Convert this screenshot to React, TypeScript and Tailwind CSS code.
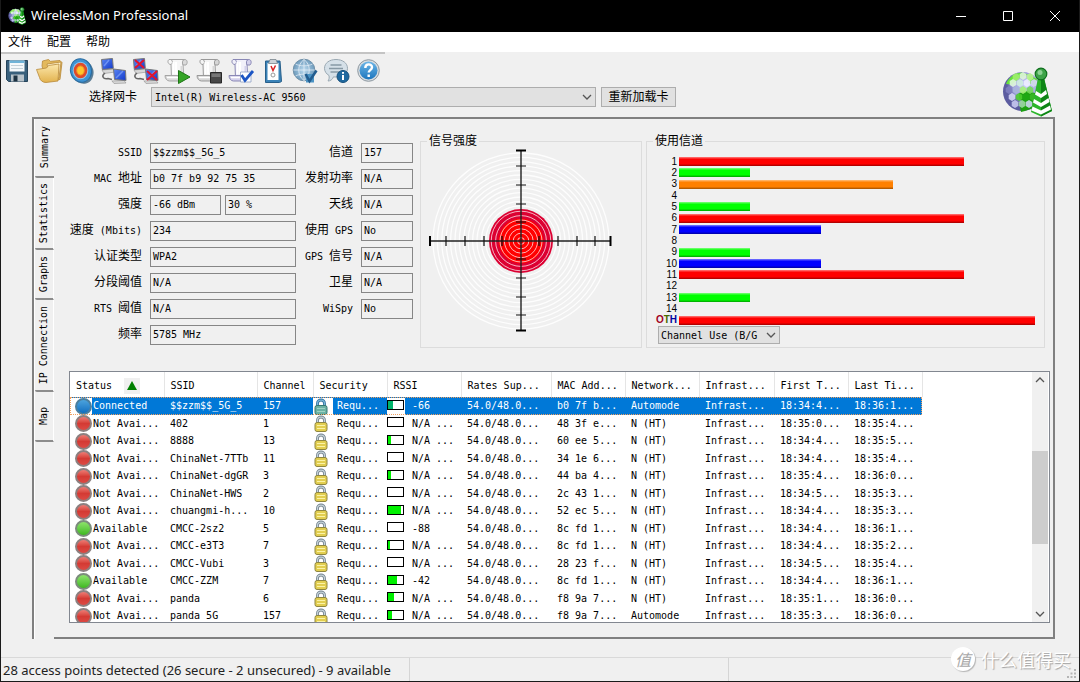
import { useState } from "react";
import type { ReactNode } from "react";

interface AccessPoint {
  status: string;
  ssid: string;
  channel: string;
  level: number;
  rssi: string;
  mac: string;
  network: string;
  first: string;
  last: string;
}

const accessPoints: AccessPoint[] = [
  { status: "Connected", ssid: "$$zzm$$_5G_5", channel: "157", level: 30, rssi: "-66", mac: "b0 7f b...", network: "Automode", first: "18:34:4...", last: "18:36:1..." },
  { status: "Not Avai...", ssid: "402", channel: "1", level: 0, rssi: "N/A ...", mac: "48 3f e...", network: "N (HT)", first: "18:35:0...", last: "18:35:4..." },
  { status: "Not Avai...", ssid: "8888", channel: "13", level: 22, rssi: "N/A ...", mac: "60 ee 5...", network: "N (HT)", first: "18:34:4...", last: "18:35:5..." },
  { status: "Not Avai...", ssid: "ChinaNet-7TTb", channel: "11", level: 0, rssi: "N/A ...", mac: "34 1e 6...", network: "N (HT)", first: "18:34:4...", last: "18:35:4..." },
  { status: "Not Avai...", ssid: "ChinaNet-dgGR", channel: "3", level: 22, rssi: "N/A ...", mac: "44 ba 4...", network: "N (HT)", first: "18:35:4...", last: "18:36:0..." },
  { status: "Not Avai...", ssid: "ChinaNet-HWS", channel: "2", level: 0, rssi: "N/A ...", mac: "2c 43 1...", network: "N (HT)", first: "18:34:5...", last: "18:35:3..." },
  { status: "Not Avai...", ssid: "chuangmi-h...", channel: "10", level: 88, rssi: "N/A ...", mac: "52 ec 5...", network: "N (HT)", first: "18:34:4...", last: "18:35:3..." },
  { status: "Available", ssid: "CMCC-2sz2", channel: "5", level: 0, rssi: "-88", mac: "8c fd 1...", network: "N (HT)", first: "18:34:4...", last: "18:36:1..." },
  { status: "Not Avai...", ssid: "CMCC-e3T3", channel: "7", level: 10, rssi: "N/A ...", mac: "8c fd 1...", network: "N (HT)", first: "18:34:4...", last: "18:35:2..." },
  { status: "Not Avai...", ssid: "CMCC-Vubi", channel: "3", level: 0, rssi: "N/A ...", mac: "28 23 f...", network: "N (HT)", first: "18:34:5...", last: "18:35:4..." },
  { status: "Available", ssid: "CMCC-ZZM", channel: "7", level: 62, rssi: "-42", mac: "8c fd 1...", network: "N (HT)", first: "18:34:4...", last: "18:36:1..." },
  { status: "Not Avai...", ssid: "panda", channel: "6", level: 38, rssi: "N/A ...", mac: "f8 9a 7...", network: "N (HT)", first: "18:35:1...", last: "18:36:0..." },
  { status: "Not Avai...", ssid: "panda 5G", channel: "157", level: 24, rssi: "N/A ...", mac: "f8 9a 7...", network: "Automode", first: "18:35:3...", last: "18:36:0..." },
];

const columns = [
  { title: "Status", width: "w-[94px]" },
  { title: "SSID", width: "w-[93px]" },
  { title: "Channel", width: "w-[56px]" },
  { title: "Security", width: "w-[74px]" },
  { title: "RSSI", width: "w-[74px]" },
  { title: "Rates Sup...", width: "w-[90px]" },
  { title: "MAC Add...", width: "w-[74px]" },
  { title: "Network...", width: "w-[74px]" },
  { title: "Infrast...", width: "w-[75px]" },
  { title: "First T...", width: "w-[74px]" },
  { title: "Last Ti...", width: "w-[74px]" },
];

const tabs = [
  { name: "Summary", height: "h-[59px]" },
  { name: "Statistics", height: "h-[72px]" },
  { name: "Graphs", height: "h-[50px]" },
  { name: "IP Connection", height: "h-[92px]" },
  { name: "Map", height: "h-[50px]" },
];

const leftFields = [
  { label: "SSID", values: ["$$zzm$$_5G_5"] },
  { label: "MAC 地址", values: ["b0 7f b9 92 75 35"] },
  { label: "强度", values: ["-66 dBm", "30 %"] },
  { label: "速度 (Mbits)", values: ["234"] },
  { label: "认证类型", values: ["WPA2"] },
  { label: "分段阈值", values: ["N/A"] },
  { label: "RTS 阈值", values: ["N/A"] },
  { label: "频率", values: ["5785 MHz"] },
];

const rightFields = [
  { label: "信道", values: ["157"] },
  { label: "发射功率", values: ["N/A"] },
  { label: "天线", values: ["N/A"] },
  { label: "使用 GPS", values: ["No"] },
  { label: "GPS 信号", values: ["N/A"] },
  { label: "卫星", values: ["N/A"] },
  { label: "WiSpy", values: ["No"] },
];

const red = "bg-[linear-gradient(#ff8080,#ff0000_25%,#ff0000_75%,#a00000)]";
const green = "bg-[linear-gradient(#80ff80,#00ff00_25%,#00ff00_75%,#00a000)]";
const blue = "bg-[linear-gradient(#8080ff,#0000ff_25%,#0000ff_75%,#0000a0)]";
const orange = "bg-[linear-gradient(#ffc080,#ff8000_25%,#ff8000_75%,#a05000)]";

const channelUse = [
  { name: "1", value: 80, color: red },
  { name: "2", value: 20, color: green },
  { name: "3", value: 60, color: orange },
  { name: "4", value: 0, color: red },
  { name: "5", value: 20, color: green },
  { name: "6", value: 80, color: red },
  { name: "7", value: 40, color: blue },
  { name: "8", value: 0, color: red },
  { name: "9", value: 20, color: green },
  { name: "10", value: 40, color: blue },
  { name: "11", value: 80, color: red },
  { name: "12", value: 0, color: red },
  { name: "13", value: 20, color: green },
  { name: "14", value: 0, color: red },
  { name: "OTH", value: 100, color: red },
];

// Chinese runs are set larger than the Latin ones
function Mixed({ text }: { text: string }) {
  return (
    <>
      {text.split(/([\u4e00-\u9fff]+)/).filter(Boolean).map((part, i) => (
        <span key={i} className={/[\u4e00-\u9fff]/.test(part) ? "text-xs" : "text-[10px]"}>{part}</span>
      ))}
    </>
  );
}

function FieldColumn({ fields, labelWidth, fieldWidth }: { fields: { label: string; values: string[] }[]; labelWidth: string; fieldWidth: string }) {
  return (
    <div className="flex flex-col gap-1.5 pt-2.5 shrink-0">
      {fields.map((field) => (
        <div key={field.label} className="flex items-center gap-2 h-5">
          <label htmlFor={field.label} className={`${labelWidth} text-right whitespace-pre leading-5`}><Mixed text={field.label} /></label>
          <div className={`${fieldWidth} flex gap-1`}>
            {field.values.map((value, i) => (
              <textarea key={i} rows={1} id={i === 0 ? field.label : undefined} aria-label={i > 0 ? "信号百分比" : undefined} readOnly defaultValue={value} className="block min-w-0 flex-1 h-5 px-0.5 border border-[#868686] bg-[#f0f0f0] text-[10px] leading-[18px] resize-none overflow-hidden whitespace-pre outline-none" />
            ))}
          </div>
        </div>
      ))}
    </div>
  );
}

function Chevron({ up = false }: { up?: boolean }) {
  return (
    <svg viewBox="0 0 10 6" className="w-2.5 h-1.5" fill="none" stroke="#555" strokeWidth="1.3">
      <path d={up ? "M1 5l4-4 4 4" : "M1 1l4 4 4-4"} />
    </svg>
  );
}

function Scroll({ fill, line, shade }: { fill: string; line: string; shade: string }) {
  return (
    <g strokeWidth="1" strokeLinejoin="round">
      <path d="M6 2.500h15.500c-1.500 1.500-2 3-1.500 5l.8 14H8.500L8 7.500C5 7.500 4 4 6 2.500z" fill={fill} stroke={line} />
      <path d="M8 7.500c2-1 2-4-.5-5" fill="none" stroke={line} />
      <path d="M20 8c-1.200-2.500-.5-5.500 1.800-5.500 2.500 0 3.200 3.500 1.200 5.500z" fill={shade} stroke={line} />
      <path d="M2 18.500h13c.2 3 2 5 4.500 5.500L6.500 24c-2.500 0-4.500-2.500-4.500-5.500z" fill={shade} stroke={line} />
      <path d="M4 20.500h11" stroke="#fff" strokeWidth="1.500" />
      <path d="M10.500 5v12M13 5v12" stroke="#fff" strokeWidth="2" />
      <path d="M18.500 9v12" stroke={shade} strokeWidth="2" />
    </g>
  );
}

function Computers() {
  return (
    <g>
      <path d="M3 13l11-1 2 3-11 1.500z" fill="#d8d8d8" stroke="#999" strokeWidth=".7" />
      <path d="M2.500 2.500l11-1 .8 10-11 1z" fill="url(#screen)" stroke="#777" />
      <path d="M6 16c-4 3-2 6.500 3 5.500l4 1" fill="none" stroke="#666" strokeWidth="1.500" />
      <path d="M13 24l12-.5 2 2.500-12 .5z" fill="#d8d8d8" stroke="#999" strokeWidth=".7" />
      <path d="M14.500 12l12 1.500.5 10-11.500-1z" fill="url(#screen)" stroke="#777" />
      <path d="M5 9l5-6M17 21l7-7" stroke="#8fb0ff" strokeWidth="1.500" opacity=".6" />
    </g>
  );
}

const toolbar: { name: string; icon: ReactNode }[] = [
  {
    name: "Save",
    icon: (
      <g>
        <path d="M3.500 3.500h21v21H5.500l-2-2z" fill="#39607c" stroke="#27445a" />
        <path d="M6.500 3.500h15v11h-15z" fill="#f4f8fb" />
        <path d="M6.500 3.500h15v2.500h-15z" fill="#6fb3d8" />
        <path d="M8 8.500h12M8 11.500h12" stroke="#c3d0d8" />
        <path d="M8 17.500h13v7H8z" fill="#b9c3ca" />
        <path d="M10.500 18.500h4v6h-4z" fill="#1d3242" />
      </g>
    ),
  },
  {
    name: "Open",
    icon: (
      <g stroke="#b8893a" strokeWidth=".8" strokeLinejoin="round">
        <path d="M7 9l.5-5 6-1.500 2 1.800L25 3.500l2 2-2 17-14 1z" fill="#e3b95c" />
        <path d="M12 7l14-2-2 16-9 1z" fill="#fff3cc" />
        <path d="M1.500 12.500l10-1.500 2-2.500 10.500-1.500-1 17-12 1.500c-3 0-6-2-6.500-5z" fill="url(#folder)" />
      </g>
    ),
  },
  {
    name: "Target",
    icon: (
      <g>
        <ellipse cx="16" cy="15" rx="10.500" ry="11.800" fill="#5b7d96" transform="rotate(-15 16 15)" />
        <ellipse cx="14" cy="13.500" rx="10.500" ry="11.800" fill="#3d93d4" stroke="#2b6c9f" transform="rotate(-15 14 13.500)" />
        <ellipse cx="13.500" cy="13.500" rx="7.800" ry="8.800" fill="#8fc6ee" />
        <ellipse cx="13.500" cy="13.500" rx="6.800" ry="7.800" fill="#de4a2b" />
        <ellipse cx="13.500" cy="13.500" rx="3.800" ry="4.600" fill="#ffc62e" stroke="#f38d20" />
      </g>
    ),
  },
  { name: "Connect", icon: <Computers /> },
  {
    name: "Disconnect",
    icon: (
      <g>
        <Computers />
        <path d="M4 3l9 8M13 3l-9 8M16 14l10 9M26 14l-10 9" stroke="#e3142c" strokeWidth="2" />
      </g>
    ),
  },
  {
    name: "Start logging",
    icon: (
      <g>
        <Scroll fill="#f6f6f6" line="#a5a5a5" shade="#dadada" />
        <path d="M15.500 13.500l11.500 6.500-11.500 6.500z" fill="#35a526" stroke="#1e7616" strokeLinejoin="round" />
      </g>
    ),
  },
  {
    name: "Stop logging",
    icon: (
      <g>
        <Scroll fill="#f4f4f4" line="#999" shade="#d6d6d6" />
        <path d="M15.500 15.500h11v10.500h-11z" fill="#484848" stroke="#282828" />
        <path d="M16.500 16.500h9v3.500h-9z" fill="#777" />
      </g>
    ),
  },
  {
    name: "Log options",
    icon: (
      <g>
        <Scroll fill="#f1f0fa" line="#8a88b5" shade="#d3d0ec" />
        <path d="M13.500 15h10.500v10H13.500z" fill="#fff" stroke="#8da0c4" strokeWidth=".8" />
        <path d="M14.500 18l3.500 5.500L26 14" fill="none" stroke="#1b55c4" strokeWidth="2.800" />
      </g>
    ),
  },
  {
    name: "Check list",
    icon: (
      <g>
        <path d="M6.500 4h14.500l1.500 20.500-2 1h-14z" fill="#3b83b8" stroke="#275f8a" />
        <path d="M8.500 6h11v17H8.500z" fill="#fff" />
        <path d="M11 2.500h6l1.500 4H9.500z" fill="#ccd3d8" stroke="#7a858d" strokeWidth=".8" />
        <path d="M12 9l2 4.500 2.500-5" fill="none" stroke="#d62020" strokeWidth="1.500" />
        <circle cx="14" cy="18" r="2" fill="none" stroke="#999" />
      </g>
    ),
  },
  {
    name: "Web update",
    icon: (
      <g>
        <circle cx="13" cy="13" r="10.800" fill="url(#globe)" stroke="#7291a8" />
        <path d="M2.500 13h21M13 2.500v21M4.500 7c5 2.500 12 2.500 17 0M4.500 19c5-2.500 12-2.500 17 0M13 2.500c-7 5-7 16 0 21M13 2.500c7 5 7 16 0 21" fill="none" stroke="#e3eef6" strokeWidth=".8" />
        <path d="M15 17h8v8.500h-8z" fill="#4b93c4" />
        <path d="M14.500 17l4 7L25.500 13.500" fill="none" stroke="#225d8f" strokeWidth="2.500" />
      </g>
    ),
  },
  {
    name: "Information",
    icon: (
      <g>
        <path d="M13 2.500c6.500 0 11.500 3.500 11.500 8.800S19.500 20 13 20c-1 0-1.500 0-2.500-.2-1 3-3.500 4.200-5.500 4.200 1-1.300 1.500-3.500 1-5.500C3.500 17 1.500 14.500 1.500 11.300 1.500 6 6.500 2.500 13 2.500z" fill="#d5e0e8" stroke="#9aa8b2" />
        <path d="M7.500 8h11M6 11.500h14M7.500 15h9" stroke="#8799a5" strokeWidth="1.400" />
        <circle cx="20" cy="19.500" r="6" fill="#20699f" stroke="#164f7b" />
        <path d="M20 18v5M20 15v1.800" stroke="#fff" strokeWidth="2" />
      </g>
    ),
  },
  {
    name: "Help",
    icon: (
      <g>
        <circle cx="13.500" cy="13.500" r="10.800" fill="#d7dce0" stroke="#8e99a1" />
        <circle cx="13.500" cy="13.500" r="9" fill="url(#help)" />
        <path d="M10.300 11c0-4.800 6.700-4.500 6.700-.7 0 2.700-3.300 2.900-3.300 5.200M13.700 17.500v2.500" fill="none" stroke="#fff" strokeWidth="2.400" />
      </g>
    ),
  },
];

const hexCells: [number, number, string][] = [
  [14, 10, "#9ff06c"], [21, 9, "#dff5da"], [28, 10, "#b9f58e"],
  [11, 16, "#e0f7dd"], [18, 16, "#cfeee0"], [25, 16, "#eeedff"], [32, 16, "#d8d7fb"],
  [7, 23, "#8080c0"], [14, 23, "#a8b4dc"], [21, 23, "#a4f278"], [28, 23, "#74d85a"],
  [10, 30, "#d4d5f6"], [17, 30, "#4ccc2e"], [24, 30, "#1fa814"], [31, 30, "#38b828"],
  [13, 37, "#c6c8f0"], [20, 37, "#9cd8a4"], [27, 37, "#cbd6ee"],
];

function Logo({ className }: { className: string }) {
  return (
    <svg viewBox="0 0 50 50" className={className}>
      <defs>
        <radialGradient id="ball" cx="60%" cy="35%"><stop offset="0" stopColor="#cfd0ff" /><stop offset=".7" stopColor="#9a9adb" /><stop offset="1" stopColor="#5c5ca0" /></radialGradient>
      </defs>
      <circle cx="20.500" cy="24.500" r="19.500" fill="url(#ball)" />
      <path d="M4 17c2-6 8-11 16-11.500l6 2-10 4-6 6zM27 8l8 4-2 8-7-5z" fill="#66e03c" />
      <path d="M17 26l8-2 8 2 4 6-6 9-8 3-4 1-1-5 3-4-4-5z" fill="#1da012" />
      {hexCells.map(([x, y, fill], i) => (
        <path key={i} d="M0-3.900L3.300-2V2L0 3.900-3.300 2v-4z" transform={`translate(${x} ${y})`} fill={fill} opacity=".9" />
      ))}
      <path d="M36 11l-7 34 10 4.500L50 44l-8-33z" fill="#2bb52a" />
      <path d="M39 11v38.500L50 44l-8-33z" fill="#0e8516" />
      <path d="M34 24l5 3 5-4 1 4-6 4-6-3.500zM32 32l7 4 7.500-5 1 4-8.500 5-8-4.500zM30.500 39.500l8.500 4 9-5 1 4-10 5-9.500-4z" fill="#fff" />
      <circle cx="39" cy="7" r="5.800" fill="#3da348" stroke="#0d6f1b" strokeWidth="1.200" />
      <circle cx="38" cy="5.500" r="2.500" fill="#a0dca6" opacity=".8" />
    </svg>
  );
}

function Radar() {
  const rings = Array.from({ length: 20 }, (_, i) => (i + 1) * 4.4);
  const ticks = [-75, -56, -37, -19, 18, 37, 56, 74];
  return (
    <svg viewBox="-92 -92 184 184" className="w-[184px] h-[184px] ml-2">
      <circle r="32" fill="#dc0032" />
      <circle r="22.500" fill="#ff0000" />
      {rings.map((r) => (
        <circle key={r} r={r < 33 ? r - 1 : r} fill="none" stroke="#fff" strokeWidth={r < 33 ? 1 : 1.3} opacity={r < 33 ? 0.7 : 0.85} />
      ))}
      <path d="M0-90V90M-90 0H90" stroke="#222" strokeWidth="1.400" />
      <path d="M-5-90.500H5M-5 89.500H5M-91-5V5M89.500-5V5" stroke="#000" strokeWidth="2" />
      {ticks.map((t) => (
        <path key={t} d={`M${t}-5V5M-5 ${t}H5`} stroke="#111" strokeWidth="1.200" />
      ))}
    </svg>
  );
}

function Padlock({ selected }: { selected: boolean }) {
  return (
    <svg viewBox="0 0 14 17" className="w-3.5 h-[17px] shrink-0">
      <path d="M3.500 9V5.500C3.500.8 10.500.8 10.500 5.500V9" fill="none" stroke={selected ? "#2d6f9e" : "#71808b"} strokeWidth="2.800" />
      <path d="M3.500 8V5.500C3.500 1 10.500 1 10.500 5.500V8" fill="none" stroke={selected ? "#7ab6d8" : "#c5d2da"} strokeWidth="1.200" />
      <rect x="1" y="7.500" width="12" height="9" rx="2" fill={selected ? "#6cb2a4" : "#e2ce50"} stroke={selected ? "#35776f" : "#8f8640"} />
      <path d="M3 10.500h8M3 13.500h8" stroke={selected ? "#9ed3c4" : "#fbf3a5"} />
    </svg>
  );
}

function StatusLight({ status }: { status: string }) {
  const tone =
    status === "Connected"
      ? "bg-linear-to-b from-[#4ba3dd] to-[#0d6fc0] border-[#4b7f9f]"
      : status === "Available"
        ? "bg-linear-to-b from-[#8ce46a] to-[#3cb81c] border-[#7c8c7c]"
        : "bg-linear-to-b from-[#ee7b75] via-[#d43a34] to-[#dc4a44] border-[#8c8080]";
  return <span className={`block size-[17px] rounded-full border-2 ${tone}`} />;
}

export default function App() {
  const [tab, setTab] = useState("Summary");
  const [selected, setSelected] = useState(0);

  return (
    <div className="relative h-screen min-h-[600px] flex flex-col overflow-hidden border border-t-0 border-[#1a1a1a] bg-[#f0f0f0] text-black text-[10px] font-['DejaVu_Sans_Mono','Noto_Sans_CJK_SC',monospace]">
      <svg className="absolute size-0" aria-hidden="true">
        <defs>
          <linearGradient id="screen" x2="1" y2="1"><stop offset="0" stopColor="#5a86f5" /><stop offset="1" stopColor="#1238c8" /></linearGradient>
          <linearGradient id="folder" x2="0" y2="1"><stop offset="0" stopColor="#fce8ac" /><stop offset="1" stopColor="#e2b24e" /></linearGradient>
          <radialGradient id="globe"><stop offset="0" stopColor="#b8d8ee" /><stop offset="1" stopColor="#6f9cbd" /></radialGradient>
          <linearGradient id="help" x2="0" y2="1"><stop offset="0" stopColor="#6db6e8" /><stop offset="1" stopColor="#1d76bd" /></linearGradient>
        </defs>
      </svg>

      <header className="h-8 shrink-0 flex items-center bg-black text-white pl-[7px]">
        <Logo className="size-[18px] mr-[5px]" />
        <h1 className="flex-1 text-[13px] font-['Noto_Sans',sans-serif]">WirelessMon Professional</h1>
        <button aria-label="Minimize" className="w-[47px] h-8 flex items-center justify-center">
          <svg viewBox="0 0 12 12" className="size-3" stroke="#fff"><path d="M1 6.500h10" /></svg>
        </button>
        <button aria-label="Maximize" className="w-[47px] h-8 flex items-center justify-center">
          <svg viewBox="0 0 12 12" className="size-3" stroke="#fff" fill="none"><path d="M1.500 1.500h9v9h-9z" /></svg>
        </button>
        <button aria-label="Close" className="w-12 h-8 flex items-center justify-center">
          <svg viewBox="0 0 12 12" className="size-3" stroke="#fff"><path d="M1 1l10 10M11 1L1 11" /></svg>
        </button>
      </header>

      <nav className="h-5 shrink-0 flex items-center gap-[15px] pl-[7px] bg-white text-xs leading-5">
        <button>文件</button>
        <button>配置</button>
        <button>帮助</button>
      </nav>

      <div className="h-[65px] shrink-0 flex justify-between">
        <div className="flex flex-col">
          <div className="w-96 h-0.5 bg-[#c4c4c4]" />
          <div className="flex h-[33px] items-center">
            {toolbar.map((tool) => (
              <button key={tool.name} title={tool.name} aria-label={tool.name} className="w-8 h-8 flex items-center justify-center">
                <svg viewBox="0 0 28 28" className="size-7">{tool.icon}</svg>
              </button>
            ))}
          </div>
          <div className="flex items-center h-5 pl-[88px]">
            <label htmlFor="adapter" className="text-xs w-[62px] leading-5">选择网卡</label>
            <div className="relative">
              <select id="adapter" className="appearance-none w-[445px] h-5 pl-[3px] border border-[#adadad] bg-[#e1e1e1] outline-none">
                <option>Intel(R) Wireless-AC 9560</option>
              </select>
              <span className="absolute right-1 top-[7px] pointer-events-none"><Chevron /></span>
            </div>
            <button className="ml-[5px] w-[75px] h-5 border border-[#adadad] bg-[#e1e1e1] text-xs leading-4">重新加载卡</button>
          </div>
        </div>
        <Logo className="size-[50px] mr-[27px] self-end" />
      </div>

      <main className="flex-1 min-h-0 flex ml-[31px] mr-6 border-l-2 border-t-2 border-[#808080]">
        <div role="tablist" aria-orientation="vertical" className="w-5 shrink-0 border-l border-white">
          {tabs.map((t) => (
            <button
              key={t.name}
              role="tab"
              aria-selected={tab === t.name}
              onClick={() => setTab(t.name)}
              className={`${t.height} w-full flex items-center justify-center border-b-2 border-b-[#8c8c8c] rounded-bl-xs ${tab === t.name ? "" : "border-r border-r-white"}`}
            >
              <span className="[writing-mode:vertical-rl] rotate-180 whitespace-pre leading-4">{t.name}</span>
            </button>
          ))}
        </div>

        <div className="flex-1 min-w-0 flex flex-col border-r-2 border-b-2 border-[#808080] pt-3.5">
          <div className="flex h-[215px] shrink-0">
            <FieldColumn fields={leftFields} labelWidth="w-[88px]" fieldWidth="w-[146px]" />
            <FieldColumn fields={rightFields} labelWidth="w-[57px]" fieldWidth="w-[52px]" />
            <fieldset className="ml-[7px] w-[222px] shrink-0 border border-[#dcdcdc]">
              <legend className="ml-1.5 px-0.5 text-xs leading-4">信号强度</legend>
              <Radar />
            </fieldset>
            <fieldset className="ml-1 mr-2 flex-1 min-w-0 border border-[#dcdcdc]">
              <legend className="ml-1.5 px-0.5 text-xs leading-4">使用信道</legend>
              <div className="h-[170px] mt-[7px] mr-[9px] flex flex-col font-['Liberation_Sans',sans-serif]">
                {channelUse.map((ch) => (
                  <div key={ch.name} className="flex-1 min-h-0 flex items-center">
                    {ch.name === "OTH" ? (
                      <span className="w-8 pr-0.5 text-right leading-3 font-bold"><span className="text-[#a00020]">O</span><span className="text-[#4a6a00]">T</span><span className="text-[#0000a0]">H</span></span>
                    ) : (
                      <span className="w-8 pr-0.5 text-right leading-3">{ch.name}</span>
                    )}
                    <div className="flex-1">
                      <div className={`h-[9px] ${ch.color}`} style={{ width: `${ch.value}%` }} />
                    </div>
                  </div>
                ))}
              </div>
              <div className="relative w-[122px] ml-[11px]">
                <select aria-label="使用信道" className="appearance-none w-full h-[18px] pl-0.5 border border-[#adadad] bg-[#e1e1e1] outline-none">
                  <option>Channel Use (B/G</option>
                </select>
                <span className="absolute right-1 top-1.5 pointer-events-none"><Chevron /></span>
              </div>
            </fieldset>
          </div>

          <div className="flex-1 min-h-0 mt-[23px] ml-[15px] mr-[3px] mb-3.5 flex border border-[#828790] bg-white">
            <div className="flex-1 min-w-0 overflow-hidden">
              <table className="w-[852px] table-fixed border-collapse text-left">
                <thead>
                  <tr className="h-[25px]">
                    {columns.map((col, i) => (
                      <th key={col.title} className={`${col.width} p-0 pl-1.5 pt-0.5 font-normal whitespace-pre border-r border-[#e5e5e5]`}>
                        {col.title}
                        {i === 0 && (
                          <span className="inline-flex align-middle ml-3 size-4 items-center justify-center bg-[#f0f0f0]">
                            <svg viewBox="0 0 10 9" className="w-2.5 h-[9px]"><path d="M5 0l5 9H0z" fill="#008000" /></svg>
                          </span>
                        )}
                      </th>
                    ))}
                  </tr>
                </thead>
                <tbody>
                  {accessPoints.map((ap, i) => {
                    const active = i === selected;
                    return (
                      <tr
                        key={ap.ssid}
                        onClick={() => setSelected(i)}
                        className={`odd:h-[18px] even:h-[17px] whitespace-pre leading-4 ${active ? "bg-[#0078d7] text-white outline outline-dotted -outline-offset-1 outline-[#f0a060]" : ""}`}
                      >
                        <td className="p-0">
                          <div className="flex items-center h-[17px]">
                            <span className="w-[22px] pl-[5px] bg-white"><StatusLight status={ap.status} /></span>
                            <span className="pl-px">{ap.status}</span>
                          </div>
                        </td>
                        <td className="p-0 pl-1.5">{ap.ssid}</td>
                        <td className="p-0 pl-1.5">{ap.channel}</td>
                        <td className="p-0">
                          <div className="flex items-center h-[17px]">
                            <span className="w-5 pl-px mr-1 bg-white"><Padlock selected={active} /></span>
                            Requ...
                          </div>
                        </td>
                        <td className="p-0">
                          <div className="flex items-center h-[17px]">
                            <span className="w-[18px] h-[17px] pt-0.5 mr-[7px] bg-white">
                              <span className="block w-[17px] h-2.5 border border-black">
                                <span className={`block h-full ${active ? "bg-[#00b46c]" : "bg-[#00f000]"}`} style={{ width: `${ap.level}%` }} />
                              </span>
                            </span>
                            {ap.rssi}
                          </div>
                        </td>
                        <td className="p-0 pl-1.5">54.0/48.0...</td>
                        <td className="p-0 pl-1.5">{ap.mac}</td>
                        <td className="p-0 pl-1.5">{ap.network}</td>
                        <td className="p-0 pl-1.5">Infrast...</td>
                        <td className="p-0 pl-1.5">{ap.first}</td>
                        <td className="p-0 pl-1.5">{ap.last}</td>
                      </tr>
                    );
                  })}
                </tbody>
              </table>
            </div>
            <div className="w-4 mr-px shrink-0 flex flex-col items-center bg-[#f0f0f0]">
              <button aria-label="Scroll up" className="h-4"><Chevron up /></button>
              <div className="grow-63 basis-0" />
              <div className="w-full grow-92 basis-0 bg-[#cdcdcd]" />
              <div className="grow-62 basis-0" />
              <button aria-label="Scroll down" className="h-4"><Chevron /></button>
            </div>
          </div>
        </div>
      </main>

      <footer className="mt-[18px] h-6 shrink-0 flex border-t border-[#d9d9d9] text-[13px] leading-6 font-['Noto_Sans',sans-serif] text-[#222]">
        <span className="w-[409px] pl-0.5 border-r border-[#d5d5d5] whitespace-nowrap">28 access points detected (26 secure - 2 unsecured) - 9 available</span>
        <span className="w-[319px] border-r border-[#d5d5d5]" />
        <svg viewBox="0 0 10 10" className="size-2.5 ml-auto mr-0.5 mb-0.5 self-end" fill="#b5b5b5">
          <path d="M7 0h2v2H7zM7 3.500h2v2H7zM7 7h2v2H7zM3.500 3.500h2v2h-2zM3.500 7h2v2h-2zM0 7h2v2H0z" />
        </svg>
      </footer>

      <div className="absolute right-2 bottom-2.5 flex items-center gap-1.5 text-white font-['Noto_Sans_CJK_SC',sans-serif] pointer-events-none">
        <span className="size-6 rounded-full bg-white flex items-center justify-center text-base leading-6 italic text-[#a8a8a8] shadow-[1px_1px_1px_#b5b5b5]">值</span>
        <span className="text-lg leading-6 [text-shadow:1px_1px_1px_#a0a0a0]">什么值得买</span>
      </div>
    </div>
  );
}
